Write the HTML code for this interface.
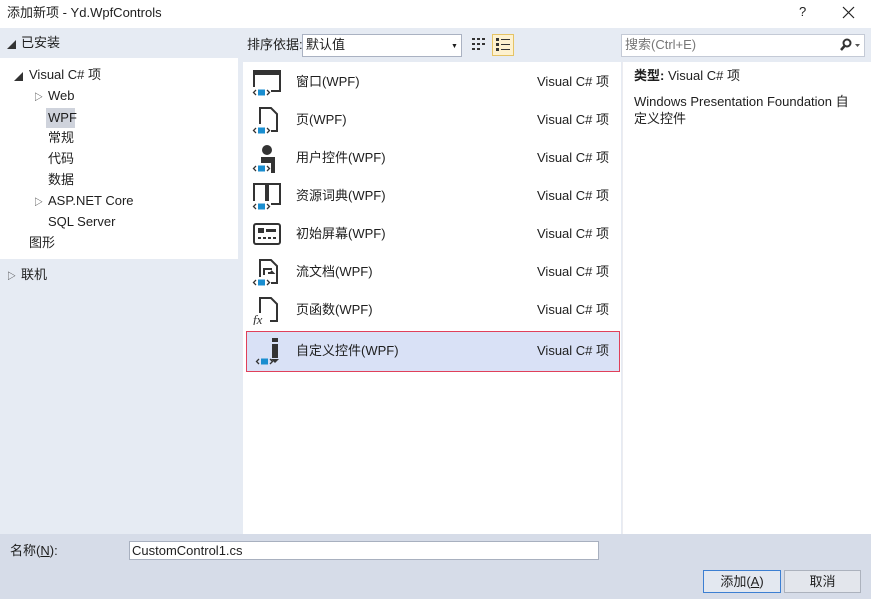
<!DOCTYPE html><html><head><meta charset="utf-8"><style>
*{margin:0;padding:0;box-sizing:border-box}
body{width:871px;height:599px;overflow:hidden;background:#e6ebf3;font-family:"Liberation Sans","Noto Sans CJK SC",sans-serif;font-size:13px;line-height:16px;color:#1e1e1e;position:relative}
.a{position:absolute;white-space:nowrap}
.row{position:absolute;left:246px;width:374px;height:38px}
.row .ic{position:absolute;left:6px;top:6px}
.row .t{position:absolute;left:50px;top:11px}
.row .v{position:absolute;left:291px;top:11px}
.tri{font-size:9px;color:#333}
</style></head><body>
<svg width="0" height="0" style="position:absolute"><defs><g id="br"><path d="M4 21l-2.5 2.5L4 26M15 21l2.5 2.5L15 26" fill="none" stroke="#333" stroke-width="1.3"/><rect x="6" y="20.5" width="7" height="6" fill="#1a8ed0"/></g></defs></svg>
<div class="a" style="left:0;top:0;width:871px;height:28px;background:#fff"></div>
<div class="a" style="left:7px;top:5px">添加新项 - Yd.WpfControls</div>
<div class="a" style="left:799px;top:4px">?</div>
<svg class="a" style="left:842px;top:6px" width="13" height="13"><path d="M1 1L12 12M12 1L1 12" stroke="#222" stroke-width="1.2"/></svg>
<!-- left -->
<div class="a tri" style="left:7px;top:37px">◢</div>
<div class="a" style="left:21px;top:35px">已安装</div>
<div class="a" style="left:0;top:58px;width:238px;height:201px;background:#fff"></div>
<div class="a tri" style="left:14px;top:69px">◢</div>
<div class="a" style="left:29px;top:67px">Visual C# 项</div>
<div class="a tri" style="left:34px;top:89px">▷</div>
<div class="a" style="left:48px;top:88px">Web</div>
<div class="a" style="left:46px;top:108px;width:29px;height:20px;background:#cfd3dc"></div>
<div class="a" style="left:48px;top:110px">WPF</div>
<div class="a" style="left:48px;top:130px">常规</div>
<div class="a" style="left:48px;top:151px">代码</div>
<div class="a" style="left:48px;top:172px">数据</div>
<div class="a tri" style="left:34px;top:194px">▷</div>
<div class="a" style="left:48px;top:193px">ASP.NET Core</div>
<div class="a" style="left:48px;top:214px">SQL Server</div>
<div class="a" style="left:29px;top:235px">图形</div>
<div class="a tri" style="left:7px;top:268px">▷</div>
<div class="a" style="left:21px;top:267px">联机</div>
<!-- toolbar -->
<div class="a" style="left:247px;top:37px">排序依据:</div>
<div class="a" style="left:302px;top:34px;width:160px;height:23px;background:#fff;border:1px solid #aab2c2"></div>
<div class="a" style="left:306px;top:37px">默认值</div>
<div class="a" style="left:451px;top:39px;font-size:7px">▼</div>
<svg class="a" style="left:471px;top:37px" width="16" height="16"><g fill="#333"><rect x="1" y="1" width="3" height="2"/><rect x="6" y="1" width="3" height="2"/><rect x="11" y="1" width="3" height="2"/><rect x="1" y="6" width="3" height="2"/><rect x="6" y="6" width="3" height="2"/><rect x="11" y="6" width="3" height="2"/><rect x="1" y="11" width="3" height="2"/><rect x="6" y="11" width="3" height="2"/></g></svg>
<div class="a" style="left:492px;top:34px;width:22px;height:22px;background:#fdf1cf;border:1px solid #e5c365"></div>
<svg class="a" style="left:495px;top:37px" width="16" height="16"><g fill="#333"><rect x="1" y="1" width="3" height="3"/><rect x="6" y="2" width="9" height="1"/><rect x="1" y="6" width="3" height="3"/><rect x="6" y="7" width="9" height="1"/><rect x="1" y="11" width="3" height="3"/><rect x="6" y="12" width="9" height="1"/></g></svg>
<div class="a" style="left:621px;top:34px;width:244px;height:23px;background:#fff;border:1px solid #c4cad6"></div>
<div class="a" style="left:625px;top:37px;color:#777">搜索(Ctrl+E)</div>
<svg class="a" style="left:839px;top:38px" width="24" height="14"><circle cx="8" cy="5" r="3.5" fill="none" stroke="#333" stroke-width="2"/><line x1="5.5" y1="8" x2="2" y2="12" stroke="#333" stroke-width="2.5"/><path d="M16 6h5l-2.5 3z" fill="#555"/></svg>
<!-- middle -->
<div class="a" style="left:243px;top:62px;width:378px;height:472px;background:#fff"></div>
<div class="a" style="left:622px;top:62px;width:249px;height:472px;background:#fff;border-left:1px solid #ececf0"></div>
<div class="a" style="left:634px;top:68px"><b>类型:</b> Visual C# 项</div>
<div class="a" style="left:634px;top:93px;white-space:normal;width:225px;line-height:17px">Windows Presentation Foundation 自定义控件</div>
<div class="row" style="top:331px;height:41px;background:#d9e1f6;border:1px solid #e0405a"></div>

<div class="row" style="top:63px"><svg class="ic" width="32" height="28"><rect x="2" y="2" width="26" height="20" fill="none" stroke="#333" stroke-width="2"/><rect x="2" y="2" width="26" height="4" fill="#333"/><rect x="0" y="18" width="19" height="10" fill="#fff"/><use href="#br"/></svg><span class="t">窗口(WPF)</span><span class="v">Visual C# 项</span></div>
<div class="row" style="top:101px"><svg class="ic" width="32" height="28"><path d="M8 1h11l6 6v17H8z" fill="none" stroke="#333" stroke-width="2"/><rect x="0" y="17" width="19" height="11" fill="#fff"/><use href="#br"/></svg><span class="t">页(WPF)</span><span class="v">Visual C# 项</span></div>
<div class="row" style="top:139px"><svg class="ic" width="32" height="28"><circle cx="15" cy="5" r="5" fill="#333"/><path d="M9 12h14v16H9z" fill="#333"/><rect x="0" y="18" width="19" height="10" fill="#fff"/><use href="#br"/></svg><span class="t">用户控件(WPF)</span><span class="v">Visual C# 项</span></div>
<div class="row" style="top:177px"><svg class="ic" width="32" height="28"><path d="M2 1h12v20H2zM16 1h12v20H16z" fill="none" stroke="#333" stroke-width="2"/><rect x="0" y="18" width="19" height="10" fill="#fff"/><use href="#br"/></svg><span class="t">资源词典(WPF)</span><span class="v">Visual C# 项</span></div>
<div class="row" style="top:215px"><svg class="ic" width="32" height="28"><rect x="2" y="3" width="26" height="20" rx="2" fill="none" stroke="#333" stroke-width="2"/><rect x="6" y="7" width="6" height="5" fill="#333"/><rect x="14" y="8" width="10" height="3" fill="#333"/><path d="M6 17h18" stroke="#333" stroke-width="2" stroke-dasharray="3 2"/></svg><span class="t">初始屏幕(WPF)</span><span class="v">Visual C# 项</span></div>
<div class="row" style="top:253px"><svg class="ic" width="32" height="28"><path d="M8 1h11l6 6v17H8z" fill="none" stroke="#333" stroke-width="2"/><path d="M12 16v-6h8M16 14h5l-2-2" fill="none" stroke="#333" stroke-width="2"/><rect x="0" y="18" width="19" height="10" fill="#fff"/><use href="#br"/></svg><span class="t">流文档(WPF)</span><span class="v">Visual C# 项</span></div>
<div class="row" style="top:291px"><svg class="ic" width="32" height="28"><path d="M8 1h11l6 6v17H8z" fill="none" stroke="#333" stroke-width="2"/><rect x="0" y="16" width="18" height="12" fill="#fff"/><text x="1" y="27" font-size="13" font-style="italic" font-family="Liberation Serif" fill="#333">fx</text></svg><span class="t">页函数(WPF)</span><span class="v">Visual C# 项</span></div>
<div class="row" style="top:332px"><svg class="ic" width="32" height="28"><rect x="20" y="0" width="6" height="4" fill="#333"/><rect x="20" y="6" width="6" height="14" fill="#333"/><path d="M19 21h8l-4 4z" fill="#333"/><g transform="translate(3,0)"><use href="#br"/></g></svg><span class="t">自定义控件(WPF)</span><span class="v">Visual C# 项</span></div>
<!-- bottom -->
<div class="a" style="left:0;top:534px;width:871px;height:65px;background:#d6dce8"></div>
<div class="a" style="left:10px;top:543px">名称(<u>N</u>):</div>
<div class="a" style="left:129px;top:541px;width:470px;height:19px;background:#fff;border:1px solid #a8b0bf"></div>
<div class="a" style="left:132px;top:543px">CustomControl1.cs</div>
<div class="a" style="left:703px;top:570px;width:78px;height:23px;background:#e3e8f0;border:1px solid #3c7fd2;text-align:center;line-height:21px">添加(<u>A</u>)</div>
<div class="a" style="left:784px;top:570px;width:77px;height:23px;background:#e3e6ec;border:1px solid #acb2bd;text-align:center;line-height:21px">取消</div>
</body></html>
